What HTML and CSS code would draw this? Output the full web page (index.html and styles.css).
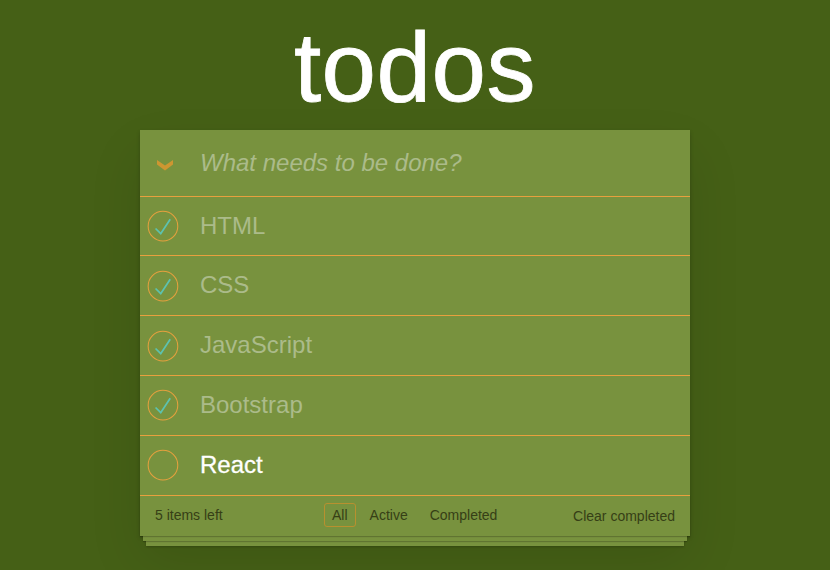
FILE: index.html
```
<!DOCTYPE html>
<html lang="en">
<head>
<meta charset="utf-8">
<title>todos</title>
<link rel="stylesheet" href="styles.css">
</head>
<body>
<section class="todoapp">
  <h1 class="title">todos</h1>
  <div class="card">
    <div class="entry"><span class="toggle-all"><svg class="chevron" viewBox="0 0 16 11"><path d="M0 0L8 5.5 16 0V4.5L8 10.5 0 4.5z"/></svg></span><input class="new-todo" placeholder="What needs to be done?"></div>
    <ul class="todo-list">
      <li class="todo done"><svg class="toggle" viewBox="-10 -18 100 135"><circle class="ring" cx="50" cy="50" r="50"/><path class="check" d="M72 25L42 71 27 56l-4 4 20 20 34-52z"/></svg><label>HTML</label></li>
      <li class="todo done"><svg class="toggle" viewBox="-10 -18 100 135"><circle class="ring" cx="50" cy="50" r="50"/><path class="check" d="M72 25L42 71 27 56l-4 4 20 20 34-52z"/></svg><label>CSS</label></li>
      <li class="todo done"><svg class="toggle" viewBox="-10 -18 100 135"><circle class="ring" cx="50" cy="50" r="50"/><path class="check" d="M72 25L42 71 27 56l-4 4 20 20 34-52z"/></svg><label>JavaScript</label></li>
      <li class="todo done"><svg class="toggle" viewBox="-10 -18 100 135"><circle class="ring" cx="50" cy="50" r="50"/><path class="check" d="M72 25L42 71 27 56l-4 4 20 20 34-52z"/></svg><label>Bootstrap</label></li>
      <li class="todo"><svg class="toggle" viewBox="-10 -18 100 135"><circle class="ring" cx="50" cy="50" r="50"/></svg><label>React</label></li>
    </ul>
    <footer class="footer">
      <span class="count">5 items left</span>
      <nav class="filters"><a class="filter selected">All</a><a class="filter">Active</a><a class="filter">Completed</a></nav>
      <span class="clear">Clear completed</span>
    </footer>
  </div>
</section>
</body>
</html>
```
FILE: styles.css
```
* { box-sizing: border-box; }
body { margin: 0; height: 570px; overflow: hidden; background: #456016; font: 14px/20px "Liberation Sans", Arial, sans-serif; color: #363f16; }
.todoapp { width: 550px; margin: 0 auto; }
.title { margin: 0; height: 130px; padding-top: 10px; font-size: 98px; line-height: 115px; font-weight: 400; letter-spacing: .5px; color: #fff; text-align: center; -webkit-text-stroke: .8px #fff; }
.card { background: #78923e; box-shadow: 0 2px 4px rgba(0,0,0,.2), 0 25px 50px rgba(0,0,0,.1); }
.entry { display: flex; height: 66px; }
.toggle-all { width: 50px; display: flex; align-items: center; justify-content: center; padding-top: 4px; }
.chevron { width: 16px; height: 11px; fill: #cd9631; }
.new-todo { flex: 1; min-width: 0; border: 0; outline: 0; background: none; padding: 0 10px; font: 24px/34px "Liberation Sans", Arial, sans-serif; }
.new-todo::placeholder { color: #abbb8a; font-style: italic; opacity: 1; }
.todo-list { margin: 0; padding: 0; list-style: none; }
.todo { display: flex; align-items: center; height: 60px; border-top: 1px solid #e8a03e; font-size: 24px; line-height: 29px; color: #fff; }
.todo:first-child { height: 59px; }
.todo label { padding: 0 0 3px 20px; }
.todo:first-child label { padding-bottom: 1px; }
.todo:not(.done) label { -webkit-text-stroke: .3px #fff; }
.done { color: #abbb8a; }
.toggle { width: 40px; height: 40px; overflow: visible; }
.todo:nth-child(n+4) .toggle { margin-bottom: 2px; }
.ring { fill: none; stroke: #e5a03e; stroke-width: 3.5; }
.check { fill: #5dc2af; }
.footer { display: grid; grid-template-columns: 169px 1fr auto; height: 41px; padding: 9px 15px 0; border-top: 1px solid #e8a03e; box-shadow: 0 1px 1px rgba(0,0,0,.2), 0 8px 0 -3px #78923e, 0 9px 1px -3px rgba(0,0,0,.2), 0 16px 0 -6px #78923e, 0 17px 2px -6px rgba(0,0,0,.2); }
.filters { display: flex; gap: 6px; align-items: flex-start; margin-top: -2px; }
.filter { border: 1px solid transparent; border-radius: 3px; padding: 1px 7px; }
.selected { border-color: #b8902f; }
.clear { padding-top: 1px; }
```
